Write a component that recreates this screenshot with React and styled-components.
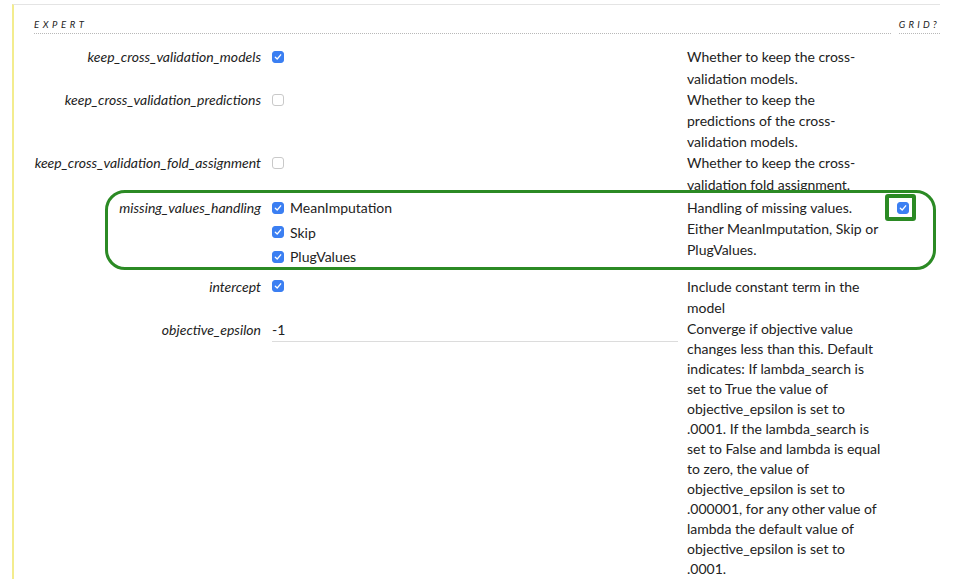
import React from 'react';
import styled, { createGlobalStyle } from 'styled-components';

const GlobalStyle = createGlobalStyle`
  html, body {
    margin: 0;
    padding: 0;
    background: #fff;
  }
  body {
    font-family: Lato, "Open Sans", sans-serif;
    color: #222;
  }
`;

const Page = styled.div`
  padding: 4px 13px 0 12px;
  height: 575px;
  overflow: hidden;
`;

const Panel = styled.section`
  border-top: 1px solid #e4e4e4;
  border-left: 2px solid #f3ec8e;
  padding: 0 0 20px 20px;
  min-height: 600px;
`;

const Header = styled.div`
  display: flex;
  align-items: flex-end;
  gap: 8px;
  padding-top: 14px;
  margin-bottom: 12px;
  font-size: 9.5px;
  font-style: italic;
  letter-spacing: 3.6px;
  line-height: 12px;
  color: #222;
`;

const SectionTitle = styled.div`
  flex: 1;
  border-bottom: 1px dotted #b8b8b8;
  padding-bottom: 2px;
`;

const GridTitle = styled.div`
  border-bottom: 1px dotted #b8b8b8;
  padding-bottom: 2px;
  letter-spacing: 3.2px;
  white-space: nowrap;
`;

const Row = styled.div`
  position: relative;
  display: grid;
  grid-template-columns: 227px 406px 196px 47px;
  column-gap: 10px;
  font-size: 14px;
  line-height: 21.5px;
  padding-bottom: ${p => p.$pad || 0}px;
`;

const Label = styled.div`
  font-style: italic;
  text-align: right;
  white-space: nowrap;
  color: #222;
`;

const ValueCell = styled.div`
  display: flex;
  flex-direction: column;
  gap: 3px;
  padding-left: 1px;
`;

const Option = styled.label`
  display: flex;
  align-items: center;
  gap: 6px;
  height: 21.5px;
  color: #222;
`;

const Box = styled.span`
  display: inline-flex;
  align-items: center;
  justify-content: center;
  box-sizing: border-box;
  width: 12px;
  height: 12px;
  border-radius: 3px;
  background: ${p => (p.$checked ? '#3b7ff2' : '#fff')};
  border: 1px solid ${p => (p.$checked ? '#3b7ff2' : '#c9c9c9')};
  flex: none;
`;

const TextInput = styled.input`
  box-sizing: border-box;
  width: 406px;
  height: 23px;
  border: none;
  border-bottom: 1px solid #dcdcdc;
  padding: 0 0 1px 0;
  font-family: inherit;
  font-size: 14px;
  color: #222;
  background: transparent;
  outline: none;
`;

const Description = styled.div`
  color: #222;
  line-height: ${p => p.$lh || 21.5}px;
`;

const GridCell = styled.div`
  position: relative;
  display: flex;
  align-items: flex-start;
  padding-left: 4px;
  padding-top: 5px;
`;

const Highlight = styled.div`
  position: absolute;
  left: 71px;
  right: 4px;
  top: -7px;
  bottom: 6px;
  border: 3px solid #2b8a24;
  border-radius: 20px;
  pointer-events: none;
`;

const SmallHighlight = styled.div`
  position: absolute;
  left: -8px;
  top: -3px;
  width: 31px;
  height: 27px;
  box-sizing: border-box;
  border: 4px solid #2b8a24;
  border-radius: 3px;
  pointer-events: none;
`;

const Check = ({ checked }) => (
  <Box $checked={checked}>
    {checked && (
      <svg width="8" height="8" viewBox="0 0 8 8">
        <path d="M1.3 4.2 L3.2 6 L6.7 1.8" fill="none" stroke="#fff" strokeWidth="1.3" strokeLinecap="round" strokeLinejoin="round" />
      </svg>
    )}
  </Box>
);

const rows = [
  {
    name: 'keep_cross_validation_models',
    options: [{ checked: true }],
    desc: 'Whether to keep the cross-validation models.',
  },
  {
    name: 'keep_cross_validation_predictions',
    options: [{ checked: false }],
    desc: 'Whether to keep the predictions of the cross-validation models.',
    lh: 21,
  },
  {
    name: 'keep_cross_validation_fold_assignment',
    options: [{ checked: false }],
    desc: 'Whether to keep the cross-validation fold assignment.',
    pad: 2,
  },
  {
    name: 'missing_values_handling',
    options: [
      { checked: true, text: 'MeanImputation' },
      { checked: true, text: 'Skip' },
      { checked: true, text: 'PlugValues' },
    ],
    desc: 'Handling of missing values. Either MeanImputation, Skip or PlugValues.',
    grid: true,
    highlight: true,
    pad: 8,
    lh: 21,
  },
  {
    name: 'intercept',
    options: [{ checked: true }],
    desc: 'Include constant term in the model',
  },
  {
    name: 'objective_epsilon',
    input: '-1',
    desc: 'Converge if objective value changes less than this. Default indicates: If lambda_search is set to True the value of objective_epsilon is set to .0001. If the lambda_search is set to False and lambda is equal to zero, the value of objective_epsilon is set to .000001, for any other value of lambda the default value of objective_epsilon is set to .0001.',
    lh: 20,
  },
];

export default function App() {
  return (
    <>
      <GlobalStyle />
      <Page>
        <Panel>
          <Header>
            <SectionTitle>EXPERT</SectionTitle>
            <GridTitle>GRID?</GridTitle>
          </Header>
          {rows.map(row => (
            <Row key={row.name} $pad={row.pad}>
              <Label>{row.name}</Label>
              <ValueCell>
                {row.input !== undefined ? (
                  <TextInput defaultValue={row.input} />
                ) : (
                  row.options.map((o, i) => (
                    <Option key={i}>
                      <Check checked={o.checked} />
                      {o.text}
                    </Option>
                  ))
                )}
              </ValueCell>
              <Description $lh={row.lh}>{row.desc}</Description>
              <GridCell>
                {row.grid && (
                  <>
                    <Check checked />
                    <SmallHighlight />
                  </>
                )}
              </GridCell>
              {row.highlight && <Highlight />}
            </Row>
          ))}
        </Panel>
      </Page>
    </>
  );
}
